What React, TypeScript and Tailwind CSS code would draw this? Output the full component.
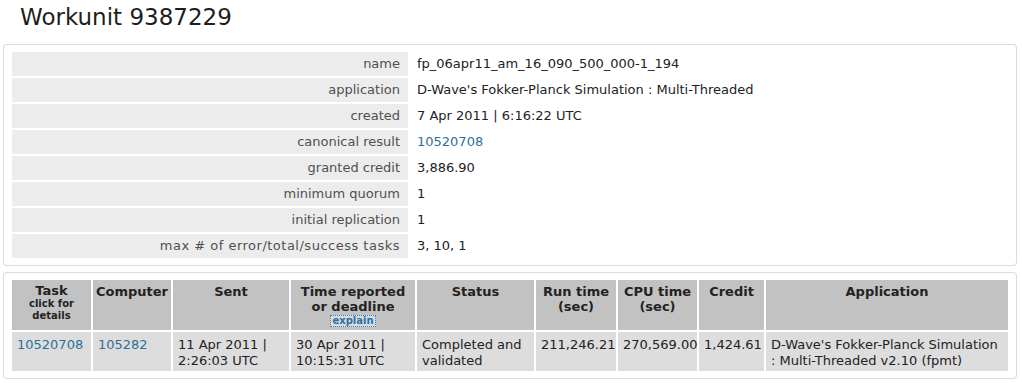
import React from "react";

const info: { label: string; value: React.ReactNode; wide?: boolean }[] = [
  { label: "name", value: "fp_06apr11_am_16_090_500_000-1_194" },
  { label: "application", value: "D-Wave's Fokker-Planck Simulation : Multi-Threaded" },
  { label: "created", value: "7 Apr 2011 | 6:16:22 UTC" },
  {
    label: "canonical result",
    value: <a className="text-[#2f6f9c]">10520708</a>,
  },
  { label: "granted credit", value: "3,886.90" },
  { label: "minimum quorum", value: "1" },
  { label: "initial replication", value: "1" },
  { label: "max # of error/total/success tasks", value: "3, 10, 1", wide: true },
];

function Panel({ children, className = "" }: { children: React.ReactNode; className?: string }) {
  return (
    <div
      className={
        "ml-[3px] w-[1014px] rounded-[4px] border border-[#dcdcdc] bg-white pl-[8px] pr-[7px] pt-[7px] pb-[7px] shadow-[0_0_1px_#e6e6e6] " +
        className
      }
    >
      {children}
    </div>
  );
}

function HeadCell({ children }: { children: React.ReactNode }) {
  return (
    <div className="bg-[#c2c2c2] px-[3px] pt-[4px] text-center font-bold leading-[15px] text-[#222]">
      {children}
    </div>
  );
}

function Cell({ children, right = false }: { children: React.ReactNode; right?: boolean }) {
  return (
    <div
      className={
        "bg-[#dddddd] px-[5px] pt-[5px] leading-[16px] text-[#222] " + (right ? "text-right" : "text-left")
      }
    >
      {children}
    </div>
  );
}

export default function App() {
  return (
    <div className="h-[383px] w-[1022px] overflow-hidden bg-white font-['DejaVu_Sans',Verdana,sans-serif] text-[13px]">
      <h2 className="pl-[20px] pt-[2px] text-[23px] leading-[30px] font-normal text-[#1e1e1e]">
        Workunit 9387229
      </h2>

      <Panel className="mt-[12px]">
        <div className="grid grid-cols-[396px_1fr] gap-[2px]">
          {info.map((row) => (
            <React.Fragment key={row.label}>
              <div
                className={
                  "h-[24px] bg-[#ececec] pr-[8px] text-right leading-[24px] text-[#505050] " +
                  (row.wide ? "tracking-[0.5px]" : "")
                }
              >
                {row.label}
              </div>
              <div className="h-[24px] pl-[7px] leading-[24px] text-[#222]">{row.value}</div>
            </React.Fragment>
          ))}
        </div>
      </Panel>

      <Panel className="mt-[6px]">
        <div className="grid grid-cols-[79px_78px_116px_124px_117px_80px_79px_65px_242px] grid-rows-[50px_39px] gap-[2px]">
          <HeadCell>
            <div className="leading-[14px]">Task</div>
            <div className="text-[10px] leading-[12px]">
              click for
              <br />
              details
            </div>
          </HeadCell>
          <HeadCell>Computer</HeadCell>
          <HeadCell>Sent</HeadCell>
          <HeadCell>
            Time reported
            <br />
            or deadline
            <div className="leading-[12px]">
              <a className="inline-block border border-dotted border-[#4a7fa8] bg-[#d3dce4] px-[1px] text-[10px] leading-[10px] text-[#2f6f9c]">
                explain
              </a>
            </div>
          </HeadCell>
          <HeadCell>Status</HeadCell>
          <HeadCell>
            Run time
            <br />
            (sec)
          </HeadCell>
          <HeadCell>
            CPU time
            <br />
            (sec)
          </HeadCell>
          <HeadCell>Credit</HeadCell>
          <HeadCell>Application</HeadCell>

          <Cell>
            <a className="text-[#2f6f9c]">10520708</a>
          </Cell>
          <Cell>
            <a className="text-[#2f6f9c]">105282</a>
          </Cell>
          <Cell>
            11 Apr 2011 |
            <br />
            2:26:03 UTC
          </Cell>
          <Cell>
            30 Apr 2011 |
            <br />
            10:15:31 UTC
          </Cell>
          <Cell>
            Completed and
            <br />
            validated
          </Cell>
          <Cell right>211,246.21</Cell>
          <Cell right>270,569.00</Cell>
          <Cell right>1,424.61</Cell>
          <Cell>
            D-Wave's Fokker-Planck Simulation
            <br />
            : Multi-Threaded v2.10 (fpmt)
          </Cell>
        </div>
      </Panel>
    </div>
  );
}
